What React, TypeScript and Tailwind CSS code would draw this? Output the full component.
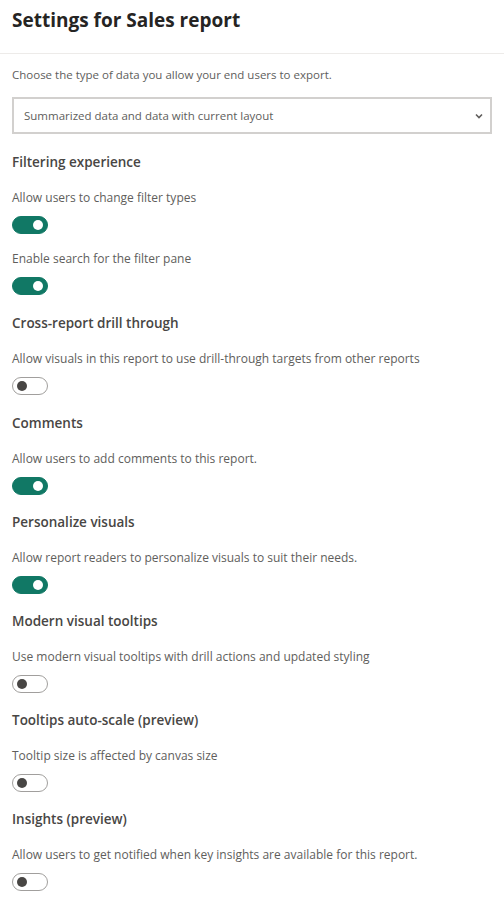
import React, { useState } from 'react';

// One toggle switch, Fluent style
function Toggle({ on, onChange }: { on: boolean; onChange: () => void }) {
  return (
    <button
      onClick={onChange}
      className={
        on
          ? 'relative block w-[36px] h-[18px] rounded-full bg-[#117865] border border-[#117865]'
          : 'relative block w-[36px] h-[18px] rounded-full bg-white border border-[#a19f9d]'
      }
    >
      <span
        className={
          on
            ? 'absolute top-[3px] right-[4px] w-[10px] h-[10px] rounded-full bg-white'
            : 'absolute top-[3px] left-[4px] w-[10px] h-[10px] rounded-full bg-[#484644]'
        }
      />
    </button>
  );
}

interface Option {
  label: string;
  on: boolean;
}

interface Section {
  title: string;
  options: Option[];
}

const sections: Section[] = [
  {
    title: 'Filtering experience',
    options: [
      { label: 'Allow users to change filter types', on: true },
      { label: 'Enable search for the filter pane', on: true },
    ],
  },
  {
    title: 'Cross-report drill through',
    options: [{ label: 'Allow visuals in this report to use drill-through targets from other reports', on: false }],
  },
  {
    title: 'Comments',
    options: [{ label: 'Allow users to add comments to this report.', on: true }],
  },
  {
    title: 'Personalize visuals',
    options: [{ label: 'Allow report readers to personalize visuals to suit their needs.', on: true }],
  },
  {
    title: 'Modern visual tooltips',
    options: [{ label: 'Use modern visual tooltips with drill actions and updated styling', on: false }],
  },
  {
    title: 'Tooltips auto-scale (preview)',
    options: [{ label: 'Tooltip size is affected by canvas size', on: false }],
  },
  {
    title: 'Insights (preview)',
    options: [{ label: 'Allow users to get notified when key insights are available for this report.', on: false }],
  },
];

function App() {
  const [state, setState] = useState<boolean[][]>(sections.map((s) => s.options.map((o) => o.on)));

  const flip = (i: number, j: number) => {
    setState((prev) => prev.map((row, a) => row.map((v, b) => (a === i && b === j ? !v : v))));
  };

  return (
    <div className="min-h-screen bg-white font-['Open_Sans',sans-serif] text-[#323130]">
      {/* Header */}
      <div className="h-[54px] px-3 pt-[6px] border-b border-[#edebe9]">
        <h1 className="text-[19px] leading-[28px] font-bold text-[#252423]">Settings for Sales report</h1>
      </div>

      <div className="px-3">
        <p className="mt-[13px] text-[11.5px] leading-[16px] text-[#605e5c]">
          Choose the type of data you allow your end users to export.
        </p>

        {/* Export dropdown */}
        <div className="mt-[14px] h-[37px] border-2 border-[#d2d0ce] flex items-center justify-between pl-[10px] pr-[6px]">
          <span className="text-[11.5px] text-[#605e5c]">Summarized data and data with current layout</span>
          <svg width="10" height="10" viewBox="0 0 10 10" className="text-[#605e5c]">
            <path d="M2 3.5 L5 6.5 L8 3.5" fill="none" stroke="currentColor" strokeWidth="1.6" />
          </svg>
        </div>

        {sections.map((s, i) => (
          <div key={s.title} className={i < 3 ? 'mt-[18px]' : 'mt-[17px]'}>
            <h2 className="text-[13.5px] leading-[20px] font-semibold text-[#484644]">{s.title}</h2>
            {s.options.map((o, j) => (
              <div key={o.label} className={j === 0 ? 'mt-[18px]' : 'mt-[17px]'}>
                <p className="text-[12px] leading-[16px] text-[#605e5c]">{o.label}</p>
                <div className="mt-[10px]">
                  <Toggle on={state[i][j]} onChange={() => flip(i, j)} />
                </div>
              </div>
            ))}
          </div>
        ))}
      </div>
    </div>
  );
}

export default App;
